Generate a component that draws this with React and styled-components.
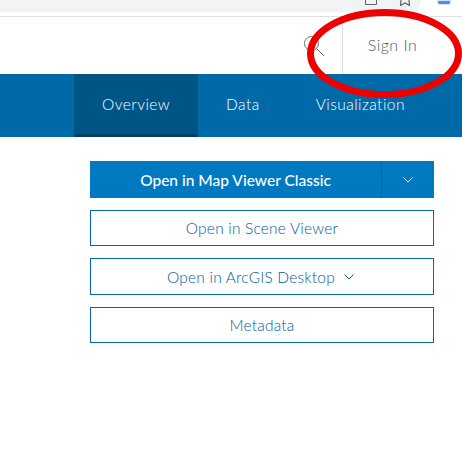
import React from 'react';
import styled, { createGlobalStyle } from 'styled-components';

const GlobalStyle = createGlobalStyle`
  html, body {
    margin: 0;
    padding: 0;
    background: #fff;
  }
  body {
    font-family: Lato, "Open Sans", sans-serif;
  }
`;

const Page = styled.div`
  position: relative;
  width: 462px;
  height: 470px;
  overflow: hidden;
  background: #fff;
`;

const BrowserBar = styled.div`
  display: flex;
  height: 17px;
  box-sizing: border-box;
  background: #fff;
  border-bottom: 1px solid #dfe1e3;
`;

const AddressPill = styled.div`
  display: flex;
  justify-content: flex-end;
  gap: 20px;
  height: 12px;
  width: 421px;
  padding-right: 9px;
  box-sizing: border-box;
  overflow: hidden;
  background: #f1f3f4;
  border-radius: 0 0 12px 0;
  color: #5f6368;
`;

const Extension = styled.div`
  width: 14px;
  height: 5px;
  margin-left: 16px;
  box-sizing: border-box;
  background: #4a90e2;
  border: 1px solid #cfe0f5;
  border-radius: 0 0 3px 3px;
`;

const Header = styled.header`
  display: flex;
  justify-content: flex-end;
  height: 57px;
  background: #fff;
`;

const SearchBox = styled.div`
  display: flex;
  align-items: center;
  padding-right: 18px;
  color: #6e6e6e;
`;

const SignIn = styled.div`
  display: flex;
  align-items: center;
  justify-content: center;
  width: 99px;
  padding: 0 20px 3px 0;
  border-left: 1px solid #dcdcdc;
  font-size: 16px;
  font-weight: 300;
  color: #555;
  letter-spacing: 0.45px;
`;

const Nav = styled.nav`
  display: flex;
  height: 63px;
  padding-left: 74px;
  background: #0069a8;
`;

const Tab = styled.div`
  display: flex;
  align-items: center;
  justify-content: center;
  height: 100%;
  min-width: ${(p) => (p.$active ? '124px' : '0')};
  box-sizing: border-box;
  padding: 0 ${(p) => p.$pad}px;
  font-size: 15.5px;
  font-weight: 300;
  letter-spacing: 0.45px;
  color: #fff;
  background: ${(p) => (p.$active ? '#005587' : 'transparent')};
  border-bottom: 3px solid ${(p) => (p.$active ? '#003f66' : 'transparent')};
`;

const Actions = styled.div`
  display: flex;
  flex-direction: column;
  gap: 12px;
  width: 344px;
  margin: 24px 0 0 90px;
`;

const SplitButton = styled.div`
  display: flex;
  height: 37px;
  background: #0079c1;
  color: #fff;
  font-size: 15.5px;
  font-weight: 500;
`;

const SplitLabel = styled.div`
  flex: 1;
  display: flex;
  align-items: center;
  justify-content: center;
`;

const SplitCaret = styled.div`
  display: flex;
  align-items: center;
  justify-content: center;
  width: 52px;
  border-left: 1px solid #00619b;
`;

const OutlineButton = styled.div`
  display: flex;
  align-items: center;
  justify-content: center;
  gap: 9px;
  height: ${(p) => p.$h}px;
  padding-right: ${(p) => p.$shift || 0}px;
  box-sizing: border-box;
  border: 1px solid #0069a8;
  color: #005c9c;
  font-size: 15.5px;
  font-weight: 300;
  letter-spacing: 0.2px;
`;

const Cutoff = styled.div`
  margin: 121px 0 0 90px;
  font-size: 20px;
  color: #323232;
`;

const Annotation = styled.svg`
  position: absolute;
  left: 300px;
  top: 0;
`;

const Caret = () => (
  <svg width="10" height="6" viewBox="0 0 10 6" fill="none" stroke="currentColor" strokeWidth="1">
    <path d="M0.5 0.5 L5 5 L9.5 0.5" />
  </svg>
);

export default function App() {
  return (
    <Page>
      <GlobalStyle />
      <BrowserBar>
        <AddressPill>
          <svg width="14" height="6" viewBox="0 0 14 6" fill="none" stroke="currentColor" strokeWidth="1">
            <path d="M1.5 0 V4.5 H12.5 V0" />
          </svg>
          <svg width="14" height="6" viewBox="0 0 14 6" fill="none" stroke="currentColor" strokeWidth="1.2">
            <path d="M3 0 L2.5 5.5 L7 3 L11.5 5.5 L11 0" />
          </svg>
        </AddressPill>
        <Extension />
      </BrowserBar>
      <Header>
        <SearchBox>
          <svg width="20" height="20" viewBox="0 0 20 20" fill="none" stroke="currentColor" strokeWidth="1">
            <circle cx="7.5" cy="7.5" r="7" />
            <path d="M12.5 12.5 L20 20" />
          </svg>
        </SearchBox>
        <SignIn>Sign In</SignIn>
      </Header>
      <Nav>
        <Tab $active $pad={28}>Overview</Tab>
        <Tab $pad={28}>Data</Tab>
        <Tab $pad={28}>Visualization</Tab>
      </Nav>
      <Actions>
        <SplitButton>
          <SplitLabel>Open in Map Viewer Classic</SplitLabel>
          <SplitCaret><Caret /></SplitCaret>
        </SplitButton>
        <OutlineButton $h={36}>Open in Scene Viewer</OutlineButton>
        <OutlineButton $h={37} $shift={3}>Open in ArcGIS Desktop <Caret /></OutlineButton>
        <OutlineButton $h={36}>Metadata</OutlineButton>
      </Actions>
      <Cutoff>Description</Cutoff>
      <Annotation width="162" height="104" viewBox="0 0 162 104">
        <ellipse cx="84.5" cy="53.5" rx="74" ry="41" fill="none" stroke="#ec0000" strokeWidth="7" />
      </Annotation>
    </Page>
  );
}
